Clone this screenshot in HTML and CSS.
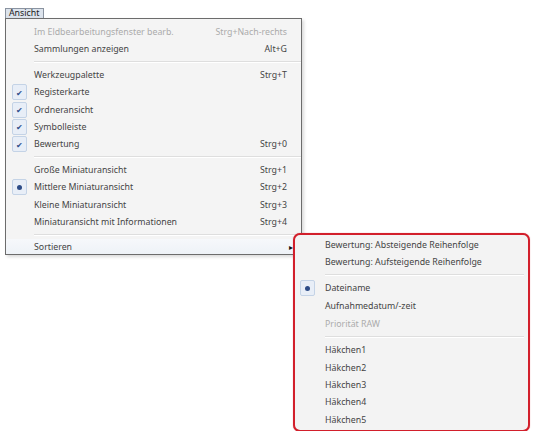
FILE: index.html
```html
<!DOCTYPE html>
<html lang="de">
<head>
    <meta charset="UTF-8">
    <title>Ansicht</title>
    <link rel="stylesheet" href="styles.css">
</head>
<body>
    <div class="menubar">
        <span class="tab">Ansicht</span>

        <div class="menu">
            <div class="item disabled"><span class="mark"></span><span class="label">Im Eldbearbeitungsfenster bearb.</span><span class="key">Strg+Nach-rechts</span></div>
            <div class="item"><span class="mark"></span><span class="label">Sammlungen anzeigen</span><span class="key">Alt+G</span></div>
            <div class="sep"></div>
            <div class="item"><span class="mark"></span><span class="label">Werkzeugpalette</span><span class="key">Strg+T</span></div>
            <div class="item"><span class="mark"><b class="check">&#10004;</b></span><span class="label">Registerkarte</span><span class="key"></span></div>
            <div class="item"><span class="mark"><b class="check">&#10004;</b></span><span class="label">Ordneransicht</span><span class="key"></span></div>
            <div class="item"><span class="mark"><b class="check">&#10004;</b></span><span class="label">Symbolleiste</span><span class="key"></span></div>
            <div class="item"><span class="mark"><b class="check">&#10004;</b></span><span class="label">Bewertung</span><span class="key">Strg+0</span></div>
            <div class="sep"></div>
            <div class="item"><span class="mark"></span><span class="label">Große Miniaturansicht</span><span class="key">Strg+1</span></div>
            <div class="item"><span class="mark"><b class="dot"><i></i></b></span><span class="label">Mittlere Miniaturansicht</span><span class="key">Strg+2</span></div>
            <div class="item"><span class="mark"></span><span class="label">Kleine Miniaturansicht</span><span class="key">Strg+3</span></div>
            <div class="item"><span class="mark"></span><span class="label">Miniaturansicht mit Informationen</span><span class="key">Strg+4</span></div>
            <div class="sep"></div>
            <div class="item open"><span class="mark"></span><span class="label">Sortieren</span><span class="key arrow">&#9656;</span></div>
        </div>

        <!-- Untermenü "Sortieren" -->
        <div class="submenu">
            <div class="item"><span class="mark"></span><span class="label">Bewertung: Absteigende Reihenfolge</span></div>
            <div class="item"><span class="mark"></span><span class="label">Bewertung: Aufsteigende Reihenfolge</span></div>
            <div class="sep"></div>
            <div class="item"><span class="mark"><b class="dot"><i></i></b></span><span class="label">Dateiname</span></div>
            <div class="item"><span class="mark"></span><span class="label">Aufnahmedatum/-zeit</span></div>
            <div class="item disabled"><span class="mark"></span><span class="label">Priorität RAW</span></div>
            <div class="sep"></div>
            <div class="item"><span class="mark"></span><span class="label">Häkchen1</span></div>
            <div class="item"><span class="mark"></span><span class="label">Häkchen2</span></div>
            <div class="item"><span class="mark"></span><span class="label">Häkchen3</span></div>
            <div class="item"><span class="mark"></span><span class="label">Häkchen4</span></div>
            <div class="item"><span class="mark"></span><span class="label">Häkchen5</span></div>
        </div>
    </div>
</body>
</html>
```

FILE: styles.css
```css
body {
    margin: 0;
    background: #fff;
    font-family: 'Noto Sans', 'Open Sans', sans-serif;
    font-size: 8.8px;
    color: #444;
}
.menubar {
    position: relative;
    min-height: 431px;
    padding: 8px 0 0 5px;
    box-sizing: border-box;
}
.tab {
    display: block;
    width: fit-content;
    height: 9px;
    line-height: 9px;
    padding: 0 4px 0 3px;
    background: #dce3ec;
    border: 1px solid #8a93a0;
    border-bottom: none;
    color: #222;
}
.menu {
    width: 295px;
    padding: 4px 0 0;
    background: #f4f4f4;
    border: 1px solid #6c6c6c;
    box-shadow: 2px 2px 3px rgba(0,0,0,0.15);
}
.item {
    display: flex;
    align-items: center;
    height: 17.4px;
}
.mark {
    width: 28px;
    flex: none;
    display: flex;
    justify-content: center;
    align-items: center;
}
.label { flex: 1; }
.key {
    padding-right: 14px;
    text-align: right;
}
.disabled { color: #ababab; }
.sep {
    height: 1px;
    margin: 3.3px 0 3px 28px;
    background: #dedede;
    border-bottom: 1px solid #fff;
}
.check, .dot {
    display: flex;
    justify-content: center;
    align-items: center;
    width: 13px;
    height: 14px;
    margin-left: -2px;
    background: #e8eef7;
    border: 1px solid #c4d3e6;
    border-radius: 2px;
    color: #2c4c8c;
    font-size: 8px;
    font-weight: normal;
}
.dot i {
    width: 5px;
    height: 5px;
    border-radius: 50%;
    background: #2d4b86;
}
.arrow {
    padding-right: 8px;
    font-size: 8px;
    color: #111;
}
.open {
    height: 15px;
    background: linear-gradient(#f6f8fb, #eef2f7);
}
.submenu {
    position: absolute;
    left: 293px;
    top: 233px;
    width: 233px;
    padding: 1px 0 2px;
    background: #f3f3f3;
    border: 2.5px solid #d21f2b;
    border-radius: 7px;
    box-shadow: 0 0 1px rgba(210,31,43,0.6);
}
.submenu .item { height: 17.3px; }
.submenu .mark { width: 30px; }
.submenu .dot { margin-left: -6px; }
.submenu .sep { margin: 3.5px 4px 3.5px 30px; }
.submenu .item:nth-child(5) { height: 18.5px; }
```
